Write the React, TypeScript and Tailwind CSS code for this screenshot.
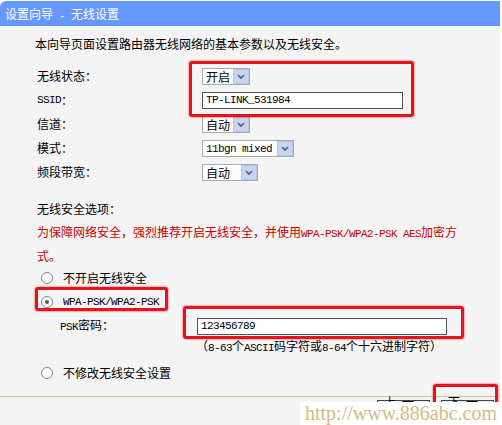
import React from 'react';

const Asc = ({ children }: { children: React.ReactNode }) => (
  <span className="whitespace-pre font-['Liberation_Mono',monospace] text-[11px] tracking-[-0.6px]">{children}</span>
);

const Chevron = () => (
  <svg width="8" height="5" viewBox="0 0 8 5">
    <path d="M1 1 L4 4 L7 1" stroke="#4a5f88" strokeWidth="1.7" fill="none" />
  </svg>
);

const Select = ({ value, w }: { value: React.ReactNode; w: string }) => (
  <div className={`flex h-[17px] items-center border border-[#a5acb5] bg-white ${w}`}>
    <div className="flex-1 whitespace-nowrap px-[3px] leading-[15px]">{value}</div>
    <div className="flex h-[15px] w-[16px] items-center justify-center border border-[#b1c3e6] bg-[#c7d5f1]">
      <Chevron />
    </div>
  </div>
);

const Radio = ({ on }: { on?: boolean }) => (
  <span className="flex h-[12px] w-[12px] items-center justify-center rounded-full border border-[#7a8796] bg-white">
    {on && <span className="h-[4px] w-[4px] rounded-full bg-[#3c6d3c]" />}
  </span>
);

const Mark = ({ cls }: { cls: string }) => (
  <div className={`pointer-events-none absolute rounded-[3px] border-[3px] border-[#e3141c] shadow-[0_0_2px_#e3141c] ${cls}`} />
);

const rows: { label: React.ReactNode; control: React.ReactNode }[] = [
  { label: '无线状态：', control: <Select value="开启" w="w-[48px]" /> },
  {
    label: <><Asc>SSID</Asc>：</>,
    control: (
      <div className="flex h-[17px] w-[201px] items-center border border-[#555] bg-white px-[3px]">
        <Asc>TP-LINK_531984</Asc>
      </div>
    ),
  },
  { label: '信道：', control: <Select value="自动" w="w-[48px]" /> },
  { label: '模式：', control: <Select value={<Asc>11bgn mixed</Asc>} w="w-[92px]" /> },
  { label: '频段带宽：', control: <Select value="自动" w="w-[56px]" /> },
];

export default function App() {
  return (
    <div className="relative h-[425px] w-[502px] overflow-hidden bg-white font-['Noto_Sans_CJK_SC',sans-serif] text-[12px] text-black">
      <div className="flex h-[425px] w-[500px] flex-col">
        {/* title bar */}
        <div className="mt-[1px] h-[25px] rounded-tl-[6px] bg-[#6699ff] px-[5px] leading-[25px] text-white">
          设置向导<Asc> - </Asc>无线设置
        </div>

        <div className="flex-1 bg-[#f4f4f4]">
          <div className="pl-[35px] pt-[11px] leading-[14px]">本向导页面设置路由器无线网络的基本参数以及无线安全。</div>

          <div className="mt-[13px] grid grid-cols-[165px_1fr] pl-[37px]">
            {rows.map((r, i) => (
              <React.Fragment key={i}>
                <div className="flex h-[24px] items-center">{r.label}</div>
                <div className="flex h-[24px] items-center">{r.control}</div>
              </React.Fragment>
            ))}
          </div>

          <div className="mt-[18px] pl-[37px] leading-[14px]">无线安全选项：</div>
          <div className="mt-[5px] w-[462px] pl-[37px] leading-[21px] text-[#c80000]">
            为保障网络安全，强烈推荐开启无线安全，并使用<Asc>WPA-PSK/WPA2-PSK AES</Asc>加密方式。
          </div>

          <div className="flex h-[24px] items-center gap-[10px] pl-[41px]">
            <Radio />
            <span>不开启无线安全</span>
          </div>
          <div className="flex h-[24px] items-center gap-[10px] pl-[41px]">
            <Radio on />
            <Asc>WPA-PSK/WPA2-PSK</Asc>
          </div>
          <div className="grid h-[24px] grid-cols-[137px_1fr] items-center pl-[60px]">
            <span><Asc>PSK</Asc>密码：</span>
            <div className="flex h-[17px] w-[250px] items-center border border-[#555] bg-white px-[3px]">
              <Asc>123456789</Asc>
            </div>
          </div>
          <div className="flex h-[18px] items-center pl-[196px]">
            <span>（<Asc>8-63</Asc>个<Asc>ASCII</Asc>码字符或<Asc>8-64</Asc>个十六进制字符）</span>
          </div>
          <div className="mt-[5px] flex h-[24px] items-center gap-[10px] pl-[41px]">
            <Radio />
            <span>不修改无线安全设置</span>
          </div>

          <div className="mt-[11px] border-t border-[#dcbf8f]" />

          <div className="mt-[3px] flex justify-end gap-[11px] pr-[6px]">
            <div className="flex h-[22px] w-[53px] items-center justify-center border border-[#444] bg-[#dfe6f6] pl-[6px] tracking-[6px]">上一步</div>
            <div className="flex h-[22px] w-[53px] items-center justify-center border border-[#444] bg-[#dfe6f6] pl-[6px] tracking-[6px]">下一步</div>
          </div>
        </div>
      </div>

      {/* annotation marks */}
      <Mark cls="left-[189px] top-[61px] h-[56px] w-[225px]" />
      <Mark cls="left-[35px] top-[287px] h-[24px] w-[133px]" />
      <Mark cls="left-[183px] top-[306px] h-[33px] w-[281px]" />
      <Mark cls="left-[433px] top-[384px] h-[44px] w-[65px]" />

      {/* watermark */}
      <div className="absolute left-[300px] top-[402px] flex h-[23px] w-[202px] items-center justify-center bg-white font-['Liberation_Serif',serif] text-[20px] leading-[23px] text-[#d8b887]">
        http://www.886abc.com
      </div>
    </div>
  );
}
